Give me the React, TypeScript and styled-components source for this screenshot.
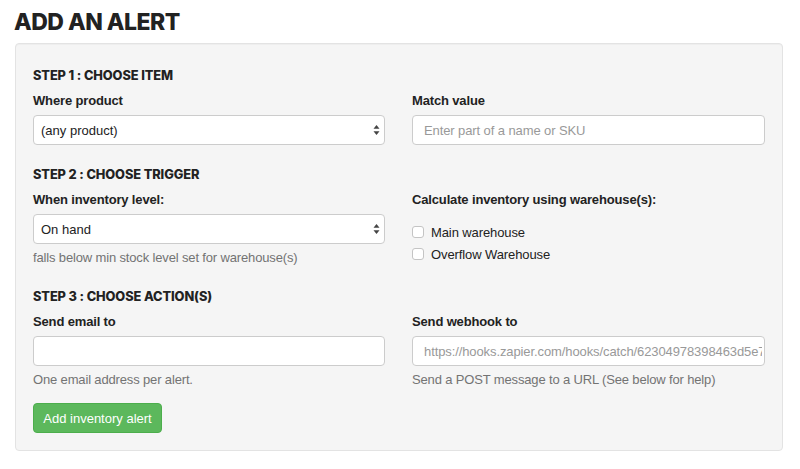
import React from "react";
import styled, { createGlobalStyle } from "styled-components";

const GlobalStyle = createGlobalStyle`
  html, body { margin: 0; padding: 0; background: #ffffff; }
  body { font-family: "Liberation Sans", Arial, sans-serif; color: #333333; }
  * { box-sizing: border-box; }
`;

const Page = styled.div`
  padding: 0 17px 0 15px;
  width: 800px;
`;

const Title = styled.h1`
  margin: 0 0 0 -1px;
  padding: 9px 0 0 0;
  height: 43px;
  font-family: "Inter", "Liberation Sans", sans-serif;
  font-weight: 800;
  font-size: 23px;
  line-height: 26px;
  letter-spacing: -0.5px;
  color: #222222;
`;

const Well = styled.div`
  background: #f5f5f5;
  border: 1px solid #e3e3e3;
  border-radius: 4px;
  padding: 24px 17px 17px 17px;
  box-shadow: inset 0 1px 1px rgba(0, 0, 0, 0.03);
`;

const StepTitle = styled.h4`
  margin: 0 0 8px 0;
  font-family: "Inter", "Liberation Sans", sans-serif;
  font-weight: 800;
  font-size: 12.8px;
  line-height: 16px;
  letter-spacing: -0.1px;
  color: #222222;
  text-transform: uppercase;
`;

const Row = styled.div<{ $last?: boolean }>`
  display: grid;
  grid-template-columns: 352px 353px;
  column-gap: 27px;
  margin-bottom: ${(p) => (p.$last ? "0" : "22px")};
`;

const Group = styled.div`
  display: flex;
  flex-direction: column;
`;

const Label = styled.label`
  font-weight: 700;
  font-size: 13px;
  line-height: 18px;
  letter-spacing: -0.15px;
  color: #222222;
  margin-bottom: 5px;
`;

const SelectBox = styled.div`
  position: relative;
  height: 30px;
  background: #ffffff;
  border: 1px solid #cccccc;
  border-radius: 4px;
  display: flex;
  align-items: center;
  padding: 0 7px;
  font-size: 13px;
  color: #222222;
`;

const Arrows = styled.svg`
  position: absolute;
  right: 4px;
  top: 50%;
  transform: translateY(-50%);
`;

const TextInput = styled.input<{ $tight?: boolean }>`
  height: 30px;
  width: 100%;
  background: #ffffff;
  border: 1px solid #cccccc;
  border-radius: 4px;
  padding: ${(p) => (p.$tight ? "0 2px 0 11px" : "0 11px")};
  font-family: "Liberation Sans", Arial, sans-serif;
  font-size: 13px;
  letter-spacing: -0.1px;
  color: #333333;
  outline: none;
  &::placeholder {
    color: #999999;
  }
`;

const Help = styled.p`
  margin: 5px 0 0 0;
  font-size: 13px;
  line-height: 18px;
  letter-spacing: -0.15px;
  color: #737373;
`;

const CheckList = styled.div`
  display: flex;
  flex-direction: column;
  margin-top: 7px;
`;

const CheckRow = styled.label`
  display: flex;
  align-items: center;
  height: 22px;
  font-size: 13px;
  letter-spacing: -0.1px;
  color: #222222;
`;

const Box = styled.span`
  width: 12px;
  height: 12px;
  border: 1px solid #c4c4c4;
  border-radius: 3px;
  background: #ffffff;
  margin-right: 7px;
  flex: none;
`;

const ButtonWrap = styled.div`
  display: flex;
`;

const Button = styled.button`
  margin-top: 14px;
  height: 30px;
  width: 129px;
  background: #5cb85c;
  border: 1px solid #4cae4c;
  border-radius: 4px;
  color: #ffffff;
  font-family: "Liberation Sans", Arial, sans-serif;
  font-size: 13px;
  padding: 0;
  cursor: pointer;
`;

const Select = ({ value }: { value: string }) => (
  <SelectBox>
    {value}
    <Arrows width="7" height="11" viewBox="0 0 7 11">
      <path d="M3.5 0.5 L6.5 4.2 L0.5 4.2 Z" fill="#444" />
      <path d="M3.5 10.5 L6.5 6.8 L0.5 6.8 Z" fill="#444" />
    </Arrows>
  </SelectBox>
);

const Check = ({ label }: { label: string }) => (
  <CheckRow>
    <Box />
    {label}
  </CheckRow>
);

export default function App() {
  return (
    <Page>
      <GlobalStyle />
      <Title>ADD AN ALERT</Title>
      <Well>
        <StepTitle>Step 1 : Choose item</StepTitle>
        <Row>
          <Group>
            <Label>Where product</Label>
            <Select value="(any product)" />
          </Group>
          <Group>
            <Label>Match value</Label>
            <TextInput placeholder="Enter part of a name or SKU" />
          </Group>
        </Row>

        <StepTitle>Step 2 : Choose trigger</StepTitle>
        <Row>
          <Group>
            <Label>When inventory level:</Label>
            <Select value="On hand" />
            <Help>falls below min stock level set for warehouse(s)</Help>
          </Group>
          <Group>
            <Label>Calculate inventory using warehouse(s):</Label>
            <CheckList>
              <Check label="Main warehouse" />
              <Check label="Overflow Warehouse" />
            </CheckList>
          </Group>
        </Row>

        <StepTitle>Step 3 : Choose action(s)</StepTitle>
        <Row $last>
          <Group>
            <Label>Send email to</Label>
            <TextInput />
            <Help>One email address per alert.</Help>
            <ButtonWrap>
              <Button>Add inventory alert</Button>
            </ButtonWrap>
          </Group>
          <Group>
            <Label>Send webhook to</Label>
            <TextInput
              $tight
              placeholder="https://hooks.zapier.com/hooks/catch/62304978398463d5e7a1/"
            />
            <Help>Send a POST message to a URL (See below for help)</Help>
          </Group>
        </Row>
      </Well>
    </Page>
  );
}
